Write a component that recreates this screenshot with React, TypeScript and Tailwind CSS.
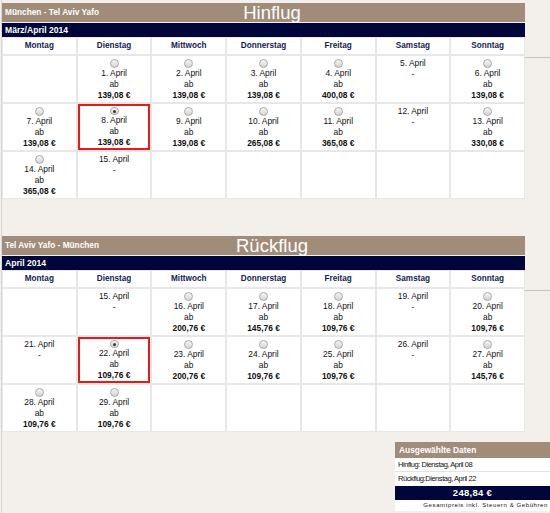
import React from "react";

type Cell = { d: string; p?: string; sel?: boolean } | null;

const days = ["Montag", "Dienstag", "Mittwoch", "Donnerstag", "Freitag", "Samstag", "Sonntag"];

const outRows: Cell[][] = [
  [
    null,
    { d: "1. April", p: "139,08 €" },
    { d: "2. April", p: "139,08 €" },
    { d: "3. April", p: "139,08 €" },
    { d: "4. April", p: "400,08 €" },
    { d: "5. April" },
    { d: "6. April", p: "139,08 €" },
  ],
  [
    { d: "7. April", p: "139,08 €" },
    { d: "8. April", p: "139,08 €", sel: true },
    { d: "9. April", p: "139,08 €" },
    { d: "10. April", p: "265,08 €" },
    { d: "11. April", p: "365,08 €" },
    { d: "12. April" },
    { d: "13. April", p: "330,08 €" },
  ],
  [{ d: "14. April", p: "365,08 €" }, { d: "15. April" }, null, null, null, null, null],
];

const backRows: Cell[][] = [
  [
    null,
    { d: "15. April" },
    { d: "16. April", p: "200,76 €" },
    { d: "17. April", p: "145,76 €" },
    { d: "18. April", p: "109,76 €" },
    { d: "19. April" },
    { d: "20. April", p: "109,76 €" },
  ],
  [
    { d: "21. April" },
    { d: "22. April", p: "109,76 €", sel: true },
    { d: "23. April", p: "200,76 €" },
    { d: "24. April", p: "109,76 €" },
    { d: "25. April", p: "109,76 €" },
    { d: "26. April" },
    { d: "27. April", p: "145,76 €" },
  ],
  [{ d: "28. April", p: "109,76 €" }, { d: "29. April", p: "109,76 €" }, null, null, null, null, null],
];

function Radio({ checked }: { checked?: boolean }) {
  return (
    <span className="mx-auto flex h-[9px] w-[9px] items-center justify-center rounded-full border border-[#a8a8a8] bg-gradient-to-b from-[#f6f6f6] to-[#d4d4d4]">
      {checked ? <span className="h-[3px] w-[3px] rounded-full bg-[#3a3a3a]" /> : null}
    </span>
  );
}

function DayCell({ cell }: { cell: Cell }) {
  if (!cell) return <div className="h-[46px] bg-white" />;
  const box = cell.sel ? "border-2 border-[#e41b1b]" : "";
  if (!cell.p) {
    return (
      <div className={`h-[46px] bg-white pt-[2px] text-center text-[8.4px] leading-[11px] text-[#111] ${box}`}>
        <div>{cell.d}</div>
        <div>-</div>
      </div>
    );
  }
  return (
    <div
      className={`flex h-[46px] flex-col items-center bg-white text-center text-[8.4px] leading-[11px] text-[#111] ${
        cell.sel ? "pt-[1px] border-2 border-[#e41b1b]" : "pt-[3px]"
      }`}
    >
      <Radio checked={cell.sel} />
      <div>{cell.d}</div>
      <div>ab</div>
      <div className="font-bold">{cell.p}</div>
    </div>
  );
}

function Section({
  route,
  title,
  month,
  rows,
  className,
}: {
  route: string;
  title: string;
  month: string;
  rows: Cell[][];
  className?: string;
}) {
  return (
    <div className={className}>
      <div className="grid h-[19px] w-[523px] grid-cols-[1fr_auto_1fr] items-center bg-[#a08c78] text-white">
        <div className="pl-[3px] text-[8.3px] font-bold">{route}</div>
        <div className="pl-[17px] text-[18.5px] leading-[19px]">{title}</div>
        <div />
      </div>
      <div className="mt-[1px] h-[14px] w-[523px] bg-[#00063a] pl-[3px] text-[8.6px] font-bold leading-[14px] text-white">
        {month}
      </div>
      <div className="flex">
        <div className="grid w-[523px] grid-cols-7 gap-[2px] bg-[#e7e7e7] p-[1px]">
          {days.map((d) => (
            <div
              key={d}
              className="flex h-[16px] items-center justify-center bg-white text-[8.2px] font-bold text-[#141c52]"
            >
              {d}
            </div>
          ))}
          {rows.flat().map((c, i) => (
            <DayCell key={i} cell={c} />
          ))}
        </div>
        <div className="mt-[20px] h-0 flex-1 border-t border-[#c6c3be]" />
      </div>
    </div>
  );
}

export default function App() {
  return (
    <div className="h-[513px] w-[550px] overflow-hidden bg-[#f3efea] pl-[1px] font-['Liberation_Sans',Arial,sans-serif]">
      <div className="h-full border-l border-[#dbd7d2] pt-[3px]">
        <Section route="München - Tel Aviv Yafo" title="Hinflug" month="März/April 2014" rows={outRows} />
        <Section
          className="mt-[37px]"
          route="Tel Aviv Yafo - München"
          title="Rückflug"
          month="April 2014"
          rows={backRows}
        />
        <div className="ml-[393px] mt-[10px] w-[155px] bg-white">
          <div className="h-[16px] bg-[#a08c78] pl-[4px] text-[8.4px] font-bold leading-[16px] text-white">
            Ausgewählte Daten
          </div>
          <div className="h-[14px] border-b border-[#e3e3e3] pl-[3px] text-[7.5px] leading-[14px] tracking-[-0.45px] text-[#111]">
            Hinflug: Dienstag, April 08
          </div>
          <div className="h-[14px] pl-[3px] text-[7.5px] leading-[14px] tracking-[-0.45px] text-[#111]">
            Rückflug:Dienstag, April 22
          </div>
          <div className="h-[14px] bg-[#00063a] text-center text-[9.5px] font-bold leading-[14px] tracking-[0.3px] text-white">
            248,84 €
          </div>
          <div className="h-[11px] pr-[2px] text-right text-[6px] leading-[11px] tracking-[0.6px] text-[#111]">
            Gesamtpreis inkl. Steuern &amp; Gebühren
          </div>
        </div>
      </div>
    </div>
  );
}
